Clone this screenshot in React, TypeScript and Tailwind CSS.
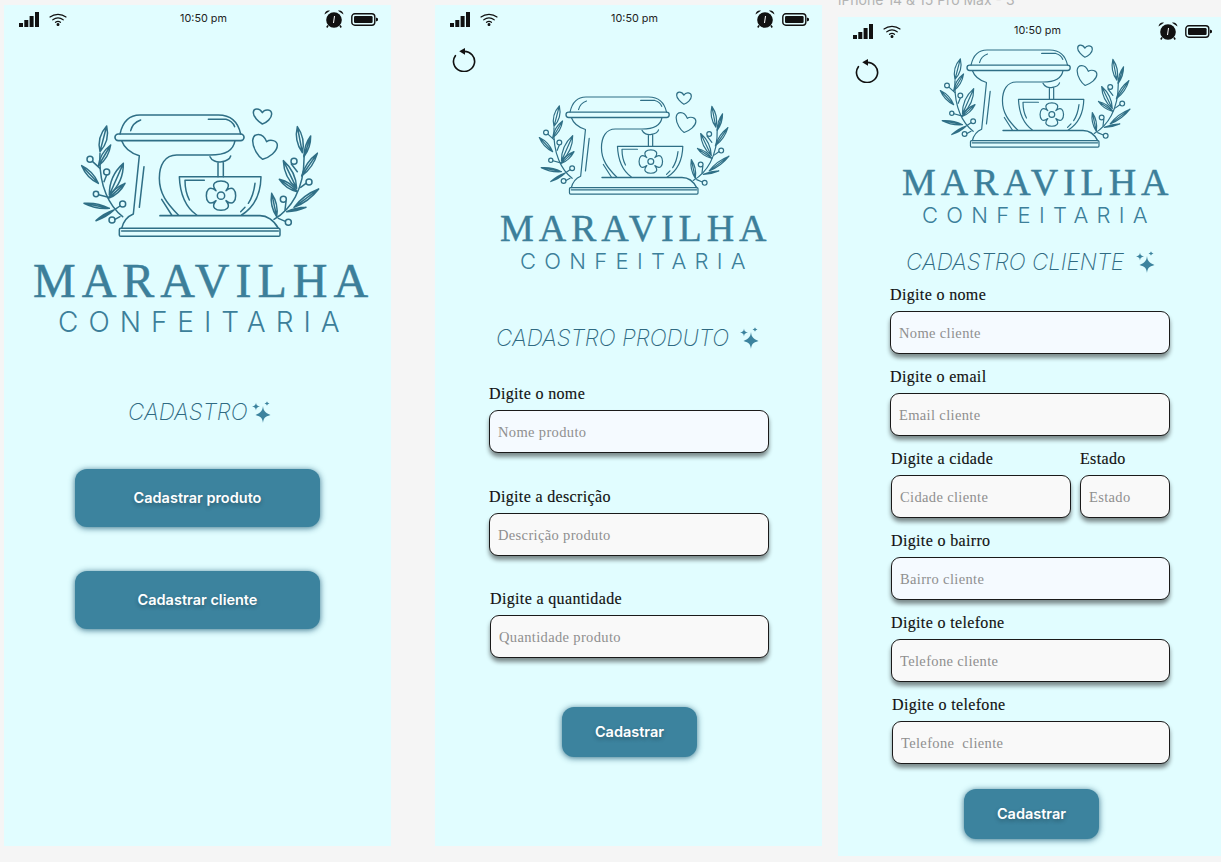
import type { ReactNode } from "react"

const LEAF = "#2f6f86"

function leaf(x1: number, y1: number, x2: number, y2: number, bulge = 18) {
  const mx = (x1 + x2) / 2
  const my = (y1 + y2) / 2
  const dx = x2 - x1
  const dy = y2 - y1
  const len = Math.hypot(dx, dy)
  const nx = (-dy / len) * bulge
  const ny = (dx / len) * bulge
  return `M${x1} ${y1}Q${mx + nx} ${my + ny} ${x2} ${y2}Q${mx - nx} ${my - ny} ${x1} ${y1}ZM${x1} ${y1}L${x2} ${y2}`
}

const leaves: [number, number, number, number, number?][] = [
  [110, 78, 90, 155, 21],
  [122, 135, 85, 198, 15],
  [35, 197, 85, 250, 14],
  [160, 190, 118, 285, 24],
  [165, 250, 115, 295, 13],
  [42, 310, 118, 325, 11],
  [78, 362, 132, 330, 7],
  [682, 80, 697, 158, 18],
  [722, 108, 702, 170, 11],
  [742, 160, 695, 228, 14],
  [640, 182, 680, 265, 20],
  [628, 238, 682, 275, 13],
  [746, 267, 672, 322, 13],
  [605, 280, 620, 350, 14],
  [708, 322, 650, 335, 6],
]

const balls = [
  [60, 178, 9],
  [110, 216, 9],
  [78, 282, 8],
  [158, 312, 9],
  [126, 360, 9],
  [672, 184, 9],
  [717, 246, 9],
  [640, 298, 9],
  [655, 367, 9],
]

function Mixer({ className }: { className: string }) {
  return (
    <svg viewBox="0 0 780 435" className={className} fill="none" stroke={LEAF} strokeWidth="4.5" strokeLinecap="round" strokeLinejoin="round">
      {/* head */}
      <path d="M150 102C158 65 175 45 210 45H445C485 45 505 70 512 102" />
      <rect x="135" y="102" width="387" height="20" rx="10" strokeWidth="5" />
      <path d="M182 92C186 76 195 66 212 60M415 58H468C482 62 490 70 494 80" />
      {/* body */}
      <path d="M155 122C165 150 185 160 208 167L190 342C170 350 160 365 155 385" />
      <path d="M222 200L208 322" />
      <path d="M495 122C490 150 470 165 420 165H320C285 165 268 195 268 235C268 280 290 310 325 345" />
      <path d="M275 298L305 345" />
      <path d="M420 170C425 182 440 188 455 185C470 183 480 175 482 168M444 186V230M460 186V230" />
      {/* bowl */}
      <path d="M328 230H573C572 280 555 320 515 345M328 230C330 280 345 320 380 345" />
      <path d="M403 241H345C345 265 350 285 358 300M555 250C552 275 545 295 535 310M525 322L512 335" />
      {/* flower */}
      <path d="M438 272C420 250 440 243 453 243C466 243 486 250 468 272C490 254 497 274 497 287C497 300 490 320 468 302C486 324 466 331 453 331C440 331 420 324 438 302C416 320 409 300 409 287C409 274 416 254 438 272Z" />
      <circle cx="453" cy="287" r="11" />
      {/* base */}
      <path d="M270 347H570C590 347 612 360 625 385" strokeWidth="5" />
      <rect x="148" y="385" width="482" height="24" rx="4" />
      <path d="M155 393H625" strokeWidth="5" />
      {/* hearts */}
      <path d="M577 72C565 65 550 50 550 38C550 24 568 22 577 38C585 25 605 28 605 42C605 55 590 68 577 72Z" />
      <path d="M578 178C565 170 548 145 548 122C550 98 578 95 590 125C600 118 622 120 622 136C622 155 598 172 578 178Z" />
      {/* wreaths */}
      <path d="M158 350C120 320 85 260 90 160M612 358C660 330 705 270 702 165" />
      <path d="M68 185L90 205M110 225L102 245M86 284L115 292M150 318L135 328M135 358L150 350M664 192L682 215M708 250L692 262M648 305L645 330M646 364L625 355" />
      {leaves.map((l, i) => (
        <path key={i} d={leaf(l[0], l[1], l[2], l[3], l[4])} />
      ))}
      {balls.map((b, i) => (
        <circle key={i} cx={b[0]} cy={b[1]} r={b[2]} />
      ))}
    </svg>
  )
}

function Sparkles({ className }: { className: string }) {
  return (
    <svg viewBox="0 0 20 22" className={className} fill="#3c839e">
      <path d="M12 5C12.6 10 13.700 11.300 19.500 14C13.700 15.700 12.600 17 12 22C11.300 17 10.300 15.700 4.500 14C10.300 11.300 11.300 10 12 5Z" />
      <path d="M5 1.500C5.300 4 6 4.700 9 5.500C6 6.300 5.300 7 5 9.500C4.700 7 4 6.300 1 5.500C4 4.700 4.700 4 5 1.500Z" />
      <path d="M16 0C16.200 1.500 16.600 1.900 18.500 2.500C16.600 3.100 16.200 3.500 16 5C15.800 3.500 15.400 3.100 13.500 2.500C15.400 1.900 15.800 1.500 16 0Z" />
    </svg>
  )
}

function StatusBar() {
  return (
    <div className="grid h-[28px] grid-cols-[1fr_auto_1fr] items-center pl-[15px] pr-[13px]">
      <div className="flex items-center gap-[10px]">
        <svg viewBox="0 0 20 15" className="h-[15px] w-[20px]" fill="#111">
          <rect x="0" y="11" width="4" height="4" />
          <rect x="5.300" y="8" width="4" height="7" />
          <rect x="10.600" y="4" width="4" height="11" />
          <rect x="16" y="0" width="4" height="15" />
        </svg>
        <svg viewBox="0 0 18 13" className="h-[13px] w-[18px]" fill="none" stroke="#111" strokeWidth="1.200" strokeLinecap="round">
          <path d="M1 4C5.500 0.500 12.500 0.500 17 4" />
          <path d="M3.800 6.800C7 4.500 11 4.500 14.200 6.800" />
          <path d="M6.500 9.300C8 8.300 10 8.300 11.500 9.300" />
          <circle cx="9" cy="11.500" r="0.900" fill="#111" />
        </svg>
      </div>
      <span className="ml-[10px] font-['Inter',sans-serif] text-[10.800px] leading-none text-[#222]">10:50 pm</span>
      <div className="flex items-center justify-end gap-[7px]">
        <svg viewBox="0 0 20 18" className="h-[18px] w-[20px]" fill="#111">
          <circle cx="10" cy="10" r="7.800" />
          <path d="M0.500 4.500C1 1.500 3.500 0 6 0.800ZM19.500 4.500C19 1.500 16.500 0 14 0.800Z" />
          <path d="M4 15.500L2.800 17.500M16 15.500L17.200 17.500" stroke="#111" strokeWidth="1.500" />
          <path d="M10.500 6L9.500 13" stroke="#fff" strokeWidth="1" />
        </svg>
        <svg viewBox="0 0 27 13" className="h-[13px] w-[27px]">
          <rect x="0.800" y="0.800" width="23" height="11.400" rx="3" fill="none" stroke="#111" strokeWidth="1.400" />
          <rect x="3" y="3" width="18.600" height="7" rx="1.200" fill="#111" />
          <path d="M25 4.500L27 5.500V7.500L25 8.500Z" fill="#111" />
        </svg>
      </div>
    </div>
  )
}

function BackIcon() {
  return (
    <svg viewBox="0 0 26 25" className="h-[24px] w-[25px]" fill="none" stroke="#111" strokeWidth="1.700" strokeLinecap="round">
      <path d="M12.500 3.500A11 10.500 0 1 1 3.500 8" />
      <path d="M13.500 0L7.500 3.500L13.500 7Z" fill="#111" stroke="none" />
    </svg>
  )
}

function Title({ text }: { text: string }) {
  return (
    <h2 className="font-['Inter',sans-serif] text-[22.400px] leading-none font-extralight whitespace-nowrap text-[#2f6a82] italic">
      {text}
    </h2>
  )
}

function SmallBrand() {
  return (
    <div className="w-[268px]">
      <p className="font-['Liberation_Serif',serif] text-[38px] leading-[30px] tracking-[4.900px] whitespace-nowrap text-[#3c7f9a] [-webkit-text-stroke:0.4px_#3c7f9a]">MARAVILHA</p>
      <p className="mt-[6px] ml-[20px] font-['Inter',sans-serif] text-[22px] leading-[24px] font-light tracking-[8.300px] whitespace-nowrap text-[#3c7f9a]">CONFEITARIA</p>
    </div>
  )
}

function Field({ label, placeholder, tint, className = "" }: { label: string; placeholder: string; tint?: boolean; className?: string }) {
  return (
    <label className={`flex flex-col ${className}`}>
      <span className="h-[26px] font-['Liberation_Serif',serif] text-[16px] leading-[20px] tracking-[0.35px] whitespace-nowrap text-[#111] [-webkit-text-stroke:0.15px_#111]">{label}</span>
      <input
        readOnly
        placeholder={placeholder}
        className={`h-[43px] w-full rounded-[9px] border border-[#1a1a1a] px-[8px] pt-[2px] font-['Liberation_Serif',serif] text-[14.500px] tracking-[0.35px] shadow-[0_4px_4px_rgba(0,0,0,0.45)] outline-none placeholder:text-[#8f8f8f] ${tint ? "bg-[#f5faff]" : "bg-[#f9f9f9]"}`}
      />
    </label>
  )
}

function ActionButton({ children, className }: { children: ReactNode; className: string }) {
  return (
    <button className={`rounded-[12px] bg-[#3c839e] font-['Inter',sans-serif] font-semibold text-white shadow-[0_1px_6px_rgba(40,100,125,0.9)] [text-shadow:0_2px_4px_rgba(0,0,0,0.3)] ${className}`}>
      {children}
    </button>
  )
}

function Phone({ children, className }: { children: ReactNode; className: string }) {
  return <div className={`relative w-[387px] shrink-0 bg-[#e1fdff] ${className}`}>{children}</div>
}

export default function App() {
  return (
    <div className="flex h-[862px] w-[1221px] overflow-hidden bg-[#f5f5f5] pl-[4px]">
      {/* Home */}
      <Phone className="mt-[5px] h-[841px]">
        <StatusBar />
        <Mixer className="mt-[67px] ml-[66px] block h-[145px] w-[260px]" />
        <div className="mt-[16px] ml-[29px]">
          <p className="font-['Liberation_Serif',serif] text-[48px] leading-[40px] tracking-[6px] whitespace-nowrap text-[#3c7f9a] [-webkit-text-stroke:0.5px_#3c7f9a]">MARAVILHA</p>
          <p className="mt-[6px] ml-[25px] font-['Inter',sans-serif] text-[28px] leading-[30px] font-light tracking-[10px] whitespace-nowrap text-[#3c7f9a]">CONFEITARIA</p>
        </div>
        <div className="mt-[63px] ml-[124px] flex items-center gap-[3px]">
          <Title text="CADASTRO" />
          <Sparkles className="h-[24px] w-[20px]" />
        </div>
        <div className="mt-[45px] ml-[71px] flex w-[245px] flex-col gap-[44px]">
          <ActionButton className="h-[58px] w-full text-[14.500px]">Cadastrar produto</ActionButton>
          <ActionButton className="h-[58px] w-full text-[14.500px]">Cadastrar cliente</ActionButton>
        </div>
      </Phone>

      {/* Cadastro produto */}
      <Phone className="mt-[5px] ml-[44px] h-[841px]">
        <StatusBar />
        <div className="absolute top-[43px] left-[17px]">
          <BackIcon />
        </div>
        <Mixer className="mt-[52px] ml-[95px] block h-[116px] w-[208px]" />
        <div className="mt-[12px] ml-[65px]">
          <SmallBrand />
        </div>
        <div className="mt-[53px] ml-[61px] flex items-center gap-[10px]">
          <Title text="CADASTRO PRODUTO" />
          <Sparkles className="h-[24px] w-[20px]" />
        </div>
        <div className="mt-[34px] ml-[54px] flex w-[280px] flex-col gap-[34px]">
          <Field label="Digite o nome" placeholder="Nome produto" tint />
          <Field label="Digite a descrição" placeholder="Descrição produto" />
          <Field label="Digite a quantidade" placeholder="Quantidade produto" className="-mt-[1px] ml-[1px]" />
        </div>
        <div className="mt-[49px] ml-[127px]">
          <ActionButton className="h-[50px] w-[135px] text-[14.500px]">Cadastrar</ActionButton>
        </div>
      </Phone>

      {/* Cadastro cliente */}
      <div className="ml-[16px] flex shrink-0 flex-col">
        <p className="-mt-[9px] h-[26px] font-['Inter',sans-serif] text-[14px] leading-[17px] text-[#b3b3b3]">iPhone 14 &amp; 15 Pro Max - 3</p>
        <Phone className="h-[839px]">
          <StatusBar />
          <div className="absolute top-[42px] left-[17px]">
            <BackIcon />
          </div>
          <Mixer className="-mt-[7px] ml-[93px] block h-[116px] w-[208px]" />
          <div className="mt-[13px] ml-[64px]">
            <SmallBrand />
          </div>
          <div className="mt-[23px] ml-[68px] flex items-center gap-[11px]">
            <Title text="CADASTRO CLIENTE" />
            <Sparkles className="h-[24px] w-[20px]" />
          </div>
          <div className="mt-[11px] ml-[52px] flex w-[280px] flex-col gap-[13px]">
            <Field label="Digite o nome" placeholder="Nome cliente" tint />
            <Field label="Digite o email" placeholder="Email cliente" />
            <div className="ml-[1px] flex w-[279px] gap-[9px]">
              <Field label="Digite a cidade" placeholder="Cidade cliente" className="w-[180px]" />
              <Field label="Estado" placeholder="Estado" className="w-[90px]" />
            </div>
            <Field label="Digite o bairro" placeholder="Bairro cliente" tint className="ml-[1px]" />
            <Field label="Digite o telefone" placeholder="Telefone cliente" className="ml-[1px]" />
            <Field label="Digite o telefone" placeholder="Telefone  cliente" className="ml-[2px]" />
          </div>
          <div className="mt-[25px] ml-[126px]">
            <ActionButton className="h-[50px] w-[135px] text-[14.500px]">Cadastrar</ActionButton>
          </div>
        </Phone>
      </div>
    </div>
  )
}
